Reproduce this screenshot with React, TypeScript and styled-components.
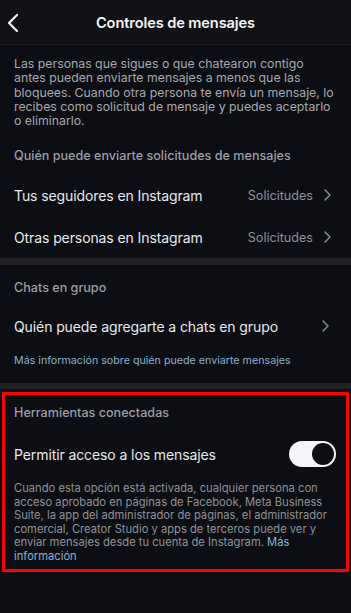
import React from 'react';
import styled, { createGlobalStyle } from 'styled-components';

const GlobalStyle = createGlobalStyle`
  html, body {
    margin: 0;
    padding: 0;
    background: #0c0e13;
  }
  * {
    box-sizing: border-box;
  }
`;

const Page = styled.div`
  width: 351px;
  min-height: 613px;
  background: #0c0e13;
  font-family: Inter, 'Noto Sans', sans-serif;
  color: #e8e9eb;
  overflow: hidden;
`;

const Header = styled.header`
  height: 45px;
  display: grid;
  grid-template-columns: 40px 1fr 40px;
  align-items: center;
  background: #101216;
  border-bottom: 1px solid #1c1e22;
`;

const BackButton = styled.button`
  background: none;
  border: 0;
  padding: 0 0 0 7px;
  height: 45px;
  display: flex;
  align-items: center;
  cursor: pointer;
`;

const Title = styled.h1`
  margin: 0;
  text-align: center;
  font-size: 14.6px;
  font-weight: 600;
  color: #f4f5f6;
  letter-spacing: -0.1px;
`;

const Intro = styled.p`
  margin: 0;
  padding: 12px 8px 0 14px;
  font-size: 12.3px;
  line-height: 14.3px;
  color: #a6a9ae;
  white-space: nowrap;
`;

const SectionLabel = styled.div<{ $top: number; $bottom: number; $inset?: number }>`
  padding: ${({ $top, $bottom, $inset = 14 }) => `${$top}px 14px ${$bottom}px ${$inset}px`};
  font-size: 12.6px;
  line-height: 16px;
  font-weight: 500;
  color: #9b9ea3;
`;

const Row = styled.div<{ $height?: number; $inset?: number; $right?: number }>`
  height: ${({ $height = 42 }) => $height}px;
  display: flex;
  align-items: center;
  justify-content: space-between;
  padding: 0 ${({ $right = 20 }) => $right}px 0 ${({ $inset = 14 }) => $inset}px;
`;

const RowText = styled.span`
  font-size: 14px;
  color: #e8e9eb;
  letter-spacing: -0.1px;
`;

const RowValue = styled.span`
  display: flex;
  align-items: center;
  gap: 11px;
  font-size: 12.6px;
  color: #8e9196;
`;

const Band = styled.div<{ $height?: number }>`
  height: ${({ $height = 7 }) => $height}px;
  background: #1f2125;
`;

const InfoLink = styled.a`
  display: block;
  padding: 7px 14px 15px;
  font-size: 10.7px;
  line-height: 14px;
  color: #86b2d2;
  text-decoration: none;
`;

const Highlight = styled.section`
  margin: 3px 2px 0 2px;
  width: 347px;
  border: 3px solid #ff0000;
`;

const Description = styled.p`
  margin: 0;
  padding: 5px 4px 6px 9px;
  font-size: 11.2px;
  line-height: 13.4px;
  color: #8f9297;
  white-space: nowrap;

  a {
    color: #86b2d2;
    text-decoration: none;
  }
`;

const Track = styled.button<{ $on: boolean }>`
  width: 47px;
  height: 26px;
  border-radius: 13px;
  border: 0;
  padding: 2px;
  background: ${({ $on }) => ($on ? '#f4f5f6' : '#3a3c40')};
  display: flex;
  justify-content: ${({ $on }) => ($on ? 'flex-end' : 'flex-start')};
  align-items: center;
`;

const Knob = styled.span`
  width: 22px;
  height: 22px;
  border-radius: 50%;
  background: #0c0e13;
`;

const Chevron = ({ color = '#8e9196' }: { color?: string }) => (
  <svg width="7" height="12" viewBox="0 0 7 12" fill="none">
    <path d="M1 1l5 5-5 5" stroke={color} strokeWidth="1.4" strokeLinecap="round" strokeLinejoin="round" />
  </svg>
);

const BackIcon = () => (
  <svg width="12" height="20" viewBox="0 0 12 20" fill="none">
    <path d="M10 2L2 10l8 8" stroke="#f4f5f6" strokeWidth="2.2" strokeLinecap="round" strokeLinejoin="round" />
  </svg>
);

function App() {
  return (
    <Page>
      <GlobalStyle />
      <Header>
        <BackButton aria-label="Atrás">
          <BackIcon />
        </BackButton>
        <Title>Controles de mensajes</Title>
        <span />
      </Header>

      <Intro>
        Las personas que sigues o que chatearon contigo
        <br />
        antes pueden enviarte mensajes a menos que las
        <br />
        bloquees. Cuando otra persona te envía un mensaje, lo
        <br />
        recibes como solicitud de mensaje y puedes aceptarlo
        <br />
        o eliminarlo.
      </Intro>

      <SectionLabel $top={20} $bottom={10}>
        Quién puede enviarte solicitudes de mensajes
      </SectionLabel>
      <Row>
        <RowText>Tus seguidores en Instagram</RowText>
        <RowValue>
          Solicitudes
          <Chevron />
        </RowValue>
      </Row>
      <Row>
        <RowText>Otras personas en Instagram</RowText>
        <RowValue>
          Solicitudes
          <Chevron />
        </RowValue>
      </Row>

      <Band />

      <SectionLabel $top={15} $bottom={9}>
        Chats en grupo
      </SectionLabel>
      <Row $right={22}>
        <RowText>Quién puede agregarte a chats en grupo</RowText>
        <Chevron />
      </Row>
      <InfoLink href="#">Más información sobre quién puede enviarte mensajes</InfoLink>

      <Band $height={6} />

      <Highlight>
        <SectionLabel $top={10} $bottom={10} $inset={9}>
          Herramientas conectadas
        </SectionLabel>
        <Row $height={46} $inset={9} $right={10}>
          <RowText>Permitir acceso a los mensajes</RowText>
          <Track $on aria-label="Permitir acceso a los mensajes">
            <Knob />
          </Track>
        </Row>
        <Description>
          Cuando esta opción está activada, cualquier persona con
          <br />
          acceso aprobado en páginas de Facebook, Meta Business
          <br />
          Suite, la app del administrador de páginas, el administrador
          <br />
          comercial, Creator Studio y apps de terceros puede ver y
          <br />
          enviar mensajes desde tu cuenta de Instagram. <a href="#">Más</a>
          <br />
          <a href="#">información</a>
        </Description>
      </Highlight>
    </Page>
  );
}

export default App;
